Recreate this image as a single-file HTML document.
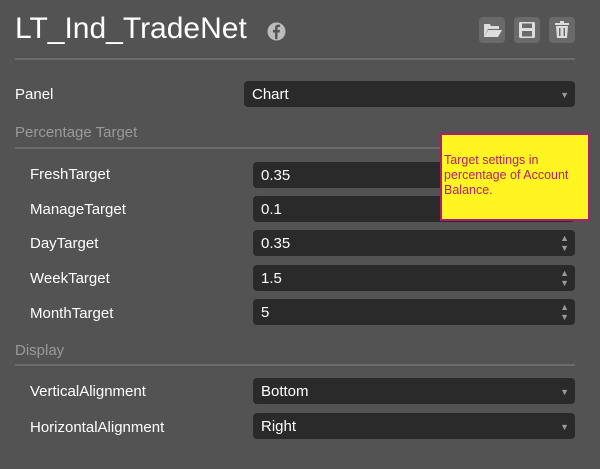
<!DOCTYPE html>
<html><head><style>
body{margin:0;width:600px;height:469px;background:#535353;font-family:"Liberation Sans",Arial,sans-serif;position:relative;overflow:hidden;color:#fff}
.a{position:absolute}
.t{left:15px;top:12px;font-size:30px;color:#fff}
.btn{top:17px;width:26px;height:26px;background:#6a6a6a;border-radius:4px}
.line{left:15px;width:560px;height:2px;background:#6b6b6b}
.lbl{font-size:15px;color:#fff}
.sec{font-size:15px;color:#9a9a9a;left:15px}
.in{background:#2a2a2a;border-radius:4px;height:26px;font-size:15px;line-height:28px;padding-left:8px;box-sizing:border-box;color:#fff}
.dd::after{content:"▼";position:absolute;right:6px;top:0;font-size:9px;color:#999}
.sp::after{content:"▲\A▼";white-space:pre;position:absolute;right:6px;top:3px;font-size:9px;line-height:10px;color:#999}
</style></head><body>
<div class="a t">LT_Ind_TradeNet</div>
<svg class="a" style="left:267px;top:22px" width="19" height="19" viewBox="0 0 20 20"><circle cx="10" cy="10" r="9.5" fill="#bbb"/><path d="M11 18V11h2.3l.4-2.7H11V6.6c0-.8.3-1.3 1.4-1.3h1.4V2.9c-.3 0-1.1-.1-2-.1-2 0-3.3 1.2-3.3 3.4v2.1H6.2V11h2.3v7z" fill="#535353"/></svg>
<div class="a btn" style="left:479px"><svg width="26" height="26"><path d="M5 7h6l1 2h8v3H9l-4 8z" fill="#ddd"/><path d="M9 13h14l-4 7H5z" fill="#ddd"/></svg></div>
<div class="a btn" style="left:514px"><svg width="26" height="26"><rect x="5" y="5" width="16" height="16" rx="1.5" fill="#ddd"/><rect x="8" y="6.5" width="10" height="4.5" fill="#6a6a6a"/><rect x="8" y="14" width="10" height="5.5" fill="#6a6a6a"/></svg></div>
<div class="a btn" style="left:549px"><svg width="26" height="26"><rect x="6" y="6" width="14" height="2" fill="#ddd"/><rect x="11" y="4" width="4" height="2.5" fill="#ddd"/><path d="M7 9h12l-1 12H8z" fill="#ddd"/><rect x="10" y="11" width="1.5" height="8" fill="#6a6a6a"/><rect x="14.5" y="11" width="1.5" height="8" fill="#6a6a6a"/></svg></div>
<div class="a line" style="top:58px"></div>
<div class="a lbl" style="left:15px;top:86px">Panel</div>
<div class="a in dd" style="left:244px;top:81px;width:331px">Chart</div>
<div class="a sec" style="top:124px">Percentage Target</div>
<div class="a line" style="top:147px"></div>
<div class="a lbl" style="left:30px;top:166px">FreshTarget</div>
<div class="a in sp" style="left:253px;top:162px;width:322px">0.35</div>
<div class="a lbl" style="left:30px;top:201px">ManageTarget</div>
<div class="a in sp" style="left:253px;top:196px;width:322px">0.1</div>
<div class="a lbl" style="left:30px;top:235px">DayTarget</div>
<div class="a in sp" style="left:253px;top:230px;width:322px">0.35</div>
<div class="a lbl" style="left:30px;top:270px">WeekTarget</div>
<div class="a in sp" style="left:253px;top:265px;width:322px">1.5</div>
<div class="a lbl" style="left:30px;top:305px">MonthTarget</div>
<div class="a in sp" style="left:253px;top:299px;width:322px">5</div>
<div class="a sec" style="top:342px">Display</div>
<div class="a line" style="top:364px"></div>
<div class="a lbl" style="left:30px;top:383px">VerticalAlignment</div>
<div class="a in dd" style="left:253px;top:378px;width:322px">Bottom</div>
<div class="a lbl" style="left:30px;top:419px">HorizontalAlignment</div>
<div class="a in dd" style="left:253px;top:413px;width:322px">Right</div>
<div class="a" style="left:440px;top:133px;width:144px;background:#fff520;border:2px solid #b01a78;color:#b5206a;font-size:12.5px;line-height:15px;padding:18px 0 0 2px;height:66px">Target settings in percentage of Account Balance.</div>
</body></html>
